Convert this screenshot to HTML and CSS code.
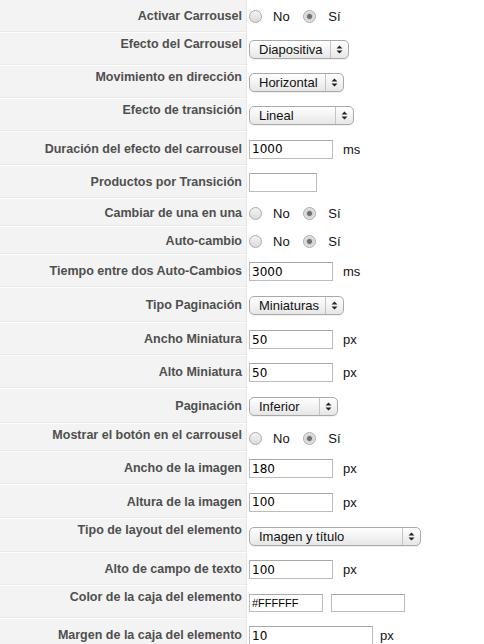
FILE: index.html
```html
<!DOCTYPE html>
<html lang="es">
<head>
    <meta charset="UTF-8">
    <title>Configuración del Carrousel</title>
    <link rel="stylesheet" href="styles.css">
</head>
<body>
    <table class="config">
        <tr>
            <td class="label">Activar Carrousel</td>
            <td class="field">
                <span class="radio"></span><span class="opt">No</span>
                <span class="radio checked"></span><span class="opt">Sí</span>
            </td>
        </tr>
        <tr>
            <td class="label top">Efecto del Carrousel</td>
            <td class="field">
                <span class="select w-100"><span class="value">Diapositiva</span><span class="arrows"><svg width="7" height="9" viewBox="0 0 7 9"><path d="M3.5 0.5L6.5 3.5H0.5Z M3.5 8.5L6.5 5.5H0.5Z" fill="#222"/></svg></span></span>
            </td>
        </tr>
        <tr>
            <td class="label top">Movimiento en dirección</td>
            <td class="field">
                <span class="select w-95"><span class="value">Horizontal</span><span class="arrows"><svg width="7" height="9" viewBox="0 0 7 9"><path d="M3.5 0.5L6.5 3.5H0.5Z M3.5 8.5L6.5 5.5H0.5Z" fill="#222"/></svg></span></span>
            </td>
        </tr>
        <tr>
            <td class="label top">Efecto de transición</td>
            <td class="field">
                <span class="select w-105"><span class="value">Lineal</span><span class="arrows"><svg width="7" height="9" viewBox="0 0 7 9"><path d="M3.5 0.5L6.5 3.5H0.5Z M3.5 8.5L6.5 5.5H0.5Z" fill="#222"/></svg></span></span>
            </td>
        </tr>
        <tr class="wide">
            <td class="label">Duración del efecto del carrousel</td>
            <td class="field"><input class="text" type="text" value="1000"><span class="unit">ms</span></td>
        </tr>
        <tr>
            <td class="label">Productos por Transición</td>
            <td class="field"><input class="text short" type="text" value=""></td>
        </tr>
        <tr class="compact">
            <td class="label">Cambiar de una en una</td>
            <td class="field">
                <span class="radio"></span><span class="opt">No</span>
                <span class="radio checked"></span><span class="opt">Sí</span>
            </td>
        </tr>
        <tr class="compact">
            <td class="label">Auto-cambio</td>
            <td class="field">
                <span class="radio"></span><span class="opt">No</span>
                <span class="radio checked"></span><span class="opt">Sí</span>
            </td>
        </tr>
        <tr>
            <td class="label">Tiempo entre dos Auto-Cambios</td>
            <td class="field"><input class="text" type="text" value="3000"><span class="unit">ms</span></td>
        </tr>
        <tr class="tall">
            <td class="label">Tipo Paginación</td>
            <td class="field">
                <span class="select w-95"><span class="value">Miniaturas</span><span class="arrows"><svg width="7" height="9" viewBox="0 0 7 9"><path d="M3.5 0.5L6.5 3.5H0.5Z M3.5 8.5L6.5 5.5H0.5Z" fill="#222"/></svg></span></span>
            </td>
        </tr>
        <tr>
            <td class="label">Ancho Miniatura</td>
            <td class="field"><input class="text" type="text" value="50"><span class="unit">px</span></td>
        </tr>
        <tr>
            <td class="label">Alto Miniatura</td>
            <td class="field"><input class="text" type="text" value="50"><span class="unit">px</span></td>
        </tr>
        <tr class="tall">
            <td class="label">Paginación</td>
            <td class="field">
                <span class="select w-89"><span class="value">Inferior</span><span class="arrows"><svg width="7" height="9" viewBox="0 0 7 9"><path d="M3.5 0.5L6.5 3.5H0.5Z M3.5 8.5L6.5 5.5H0.5Z" fill="#222"/></svg></span></span>
            </td>
        </tr>
        <tr class="compact">
            <td class="label top">Mostrar el botón en el carrousel</td>
            <td class="field">
                <span class="radio"></span><span class="opt">No</span>
                <span class="radio checked"></span><span class="opt">Sí</span>
            </td>
        </tr>
        <tr>
            <td class="label">Ancho de la imagen</td>
            <td class="field"><input class="text" type="text" value="180"><span class="unit">px</span></td>
        </tr>
        <tr class="wide">
            <td class="label">Altura de la imagen</td>
            <td class="field"><input class="text" type="text" value="100"><span class="unit">px</span></td>
        </tr>
        <tr class="wide">
            <td class="label top">Tipo de layout del elemento</td>
            <td class="field">
                <span class="select w-172"><span class="value">Imagen y título</span><span class="arrows"><svg width="7" height="9" viewBox="0 0 7 9"><path d="M3.5 0.5L6.5 3.5H0.5Z M3.5 8.5L6.5 5.5H0.5Z" fill="#222"/></svg></span></span>
            </td>
        </tr>
        <tr>
            <td class="label">Alto de campo de texto</td>
            <td class="field"><input class="text" type="text" value="100"><span class="unit">px</span></td>
        </tr>
        <tr>
            <td class="label top">Color de la caja del elemento</td>
            <td class="field"><input class="text color" type="text" value="#FFFFFF"><input class="text color swatch" type="text" value=""></td>
        </tr>
        <tr>
            <td class="label">Margen de la caja del elemento</td>
            <td class="field"><input class="text long" type="text" value="10"><span class="unit near">px</span></td>
        </tr>
    </table>
</body>
</html>
```

FILE: styles.css
```css
/* Página */
body {
    margin: 0;
    padding: 0;
    background: #fff;
    font-family: "Liberation Sans", Arial, sans-serif;
}

/* Tabla de configuración */
.config {
    width: 100%;
    border-collapse: separate;
    border-spacing: 0;
}

.config tr {
    height: 33px;
}

.config tr.wide {
    height: 34px;
}

.config tr.tall {
    height: 35px;
}

.config tr.compact {
    height: 28px;
}

.config td {
    padding: 0;
    vertical-align: middle;
    border-bottom: 1px solid #fcfcfc;
}

.label {
    width: 242px;
    padding: 0 4px 0 0 !important;
    text-align: right;
    background-color: #f3f3f3;
    border-right: 1px solid #e6e6e6;
    border-bottom: 1px solid #fdfdfd !important;
    box-shadow: inset 0 -1px 0 #e9e9e9;
    color: #4f4f4f;
    font-size: 12.5px;
    font-weight: bold;
    line-height: 14px;
    white-space: nowrap;
}

.label.top {
    vertical-align: top;
    padding-top: 4px !important;
}

.field {
    padding-left: 2px !important;
    border-bottom: none !important;
    font-size: 13px;
    color: #111;
    white-space: nowrap;
}

/* Botones de opción estilo Mac */
.radio {
    display: inline-block;
    box-sizing: border-box;
    width: 13px;
    height: 13px;
    margin: 0 11px 0 0;
    border: 1px solid #aaa;
    border-radius: 50%;
    background: linear-gradient(#f2f2f2, #dcdcdc);
    vertical-align: -2px;
}

.radio.checked {
    background: radial-gradient(circle, #6f6f6f 0, #6f6f6f 2px, #cfcfcf 3px, #ececec 6px);
}

.opt {
    margin-right: 10px;
    font-size: 13px;
}

.opt + .radio {
    margin-right: 12px;
}

/* Campos de texto */
.text {
    box-sizing: border-box;
    width: 84px;
    height: 19px;
    margin: 0;
    padding: 0 2px;
    border: 1px solid #bcbcbc;
    border-top-color: #a8a8a8;
    font-family: "DejaVu Sans", sans-serif;
    font-size: 12px;
    color: #000;
    vertical-align: middle;
    outline: none;
}

.text.short {
    width: 68px;
}

.text.long {
    width: 124px;
}

.text.color {
    width: 74px;
    height: 18px;
    font-family: "Liberation Sans", Arial, sans-serif;
    font-size: 11px;
    vertical-align: -2px;
}

.text.swatch {
    margin-left: 8px;
}

.unit {
    margin-left: 10px;
    font-size: 13px;
    vertical-align: middle;
}

.unit.near {
    margin-left: 7px;
}

/* Desplegables estilo Aqua */
.select {
    display: inline-flex;
    box-sizing: border-box;
    height: 19px;
    border: 1px solid #a9a9a9;
    border-radius: 5px;
    background: linear-gradient(#ffffff, #f3f3f3 50%, #e6e6e6);
    box-shadow: 0 1px 0 rgba(0, 0, 0, 0.06);
    vertical-align: middle;
    font-size: 13px;
    color: #111;
}

.select .value {
    flex: 1;
    padding-left: 9px;
    line-height: 17px;
}

.select .arrows {
    display: flex;
    align-items: center;
    justify-content: center;
    width: 17px;
    border-left: 1px solid #c4c4c4;
}

.w-89 { width: 89px; }
.w-95 { width: 95px; }
.w-100 { width: 100px; }
.w-105 { width: 105px; }
.w-172 { width: 172px; }
```
